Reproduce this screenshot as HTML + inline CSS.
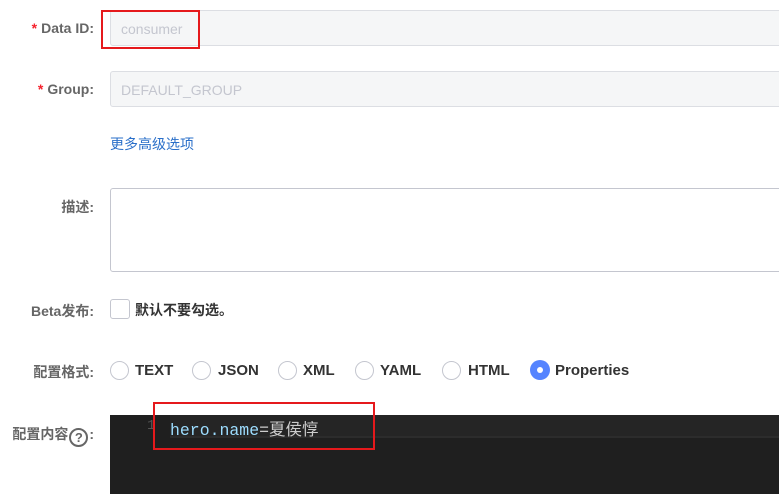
<!DOCTYPE html>
<html><head><meta charset="utf-8"><style>
body{margin:0;width:779px;height:494px;background:#fff;position:relative;overflow:hidden;font-family:"Liberation Sans","Noto Sans CJK SC",sans-serif;}
.a{position:absolute}
.lbl{position:absolute;right:685px;font-size:14px;font-weight:bold;color:#666;white-space:nowrap}
.star{color:#f5222d;margin-right:4px}
.inp{position:absolute;left:110px;width:700px;border:1px solid #dcdee3;border-radius:3px;background:#f5f6f7;color:#c4c6cf;font-size:14px;box-sizing:border-box;padding-left:10px}
.rad{position:absolute;top:360px;width:19px;height:19px;border:1px solid #c4c6cf;border-radius:50%;box-sizing:border-box}
.rt{position:absolute;top:362px;font-size:15px;font-weight:bold;color:#333}
.red{position:absolute;border:2px solid #e5191c;box-sizing:border-box}
</style></head><body>
<div class="lbl" style="top:20px"><span class="star">*</span>Data ID:</div>
<div class="inp" style="top:10px;height:36px;line-height:36px">consumer</div>
<div class="lbl" style="top:81px"><span class="star">*</span>Group:</div>
<div class="inp" style="top:71px;height:36px;line-height:36px">DEFAULT_GROUP</div>
<div class="a" style="left:110px;top:134px;font-size:14px;color:#2a6fc9">更多高级选项</div>
<div class="lbl" style="top:197px">描述:</div>
<div class="a" style="left:110px;top:188px;width:700px;height:84px;border:1px solid #c4c6cf;border-radius:3px;box-sizing:border-box"></div>
<div class="lbl" style="top:301px">Beta发布:</div>
<div class="a" style="left:110px;top:299px;width:20px;height:20px;border:1px solid #c4c6cf;border-radius:3px;box-sizing:border-box"></div>
<div class="a" style="left:135px;top:300px;font-size:14px;font-weight:bold;color:#333">默认不要勾选。</div>
<div class="lbl" style="top:362px">配置格式:</div>
<div class="rad" style="left:110px;top:361px"></div><div class="rt" style="left:135px">TEXT</div>
<div class="rad" style="left:192px;top:361px"></div><div class="rt" style="left:218px">JSON</div>
<div class="rad" style="left:278px;top:361px"></div><div class="rt" style="left:303px">XML</div>
<div class="rad" style="left:355px;top:361px"></div><div class="rt" style="left:380px">YAML</div>
<div class="rad" style="left:442px;top:361px"></div><div class="rt" style="left:468px">HTML</div>
<div class="rad" style="left:530px;top:360px;width:20px;height:20px;border:none;background:#5584ff"><div class="a" style="left:7px;top:7px;width:6px;height:6px;border-radius:50%;background:#fff"></div></div>
<div class="rt" style="left:555px">Properties</div>
<div class="lbl" style="top:424px;right:685px">配置内容<span style="display:inline-block;width:19px;height:19px;border:2px solid #666;border-radius:50%;box-sizing:border-box;font-size:13px;line-height:15px;text-align:center;vertical-align:-3px;margin:0 1px">?</span>:</div>
<div class="a" style="left:110px;top:415px;width:669px;height:79px;background:#1f1f1f"></div>
<div class="a" style="left:170px;top:415px;width:609px;height:21px;background:#252525;border-bottom:2px solid #2c2c2c"></div>
<div class="a" style="left:147px;top:418px;font-family:'Liberation Mono',monospace;font-size:14px;color:#555">1</div>
<div class="a" style="left:170px;top:416px;font-family:'Liberation Mono','Noto Sans CJK SC',monospace;font-size:16.5px;color:#9cdcfe">hero.name<span style="color:#ccc">=夏侯惇</span></div>
<div class="red" style="left:101px;top:10px;width:99px;height:39px"></div>
<div class="red" style="left:153px;top:402px;width:222px;height:48px"></div>
</body></html>
